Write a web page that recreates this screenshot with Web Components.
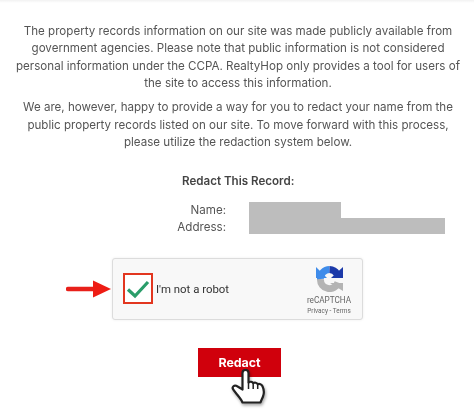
<!DOCTYPE html>
<html>
<head>
<meta charset="utf-8">
<style>
html,body{margin:0;padding:0;background:#fff}
body{width:474px;height:420px;overflow:hidden;font-family:Inter,"Liberation Sans",sans-serif;color:#4d4d4d}
p{margin:0}
</style>
</head>
<body>
<redact-page>
  <notice-text>
    <p>The property records information on our site was made publicly available from<br>government agencies. Please note that public information is not considered<br>personal information under the CCPA. RealtyHop only provides a tool for users of<br>the site to access this information.</p>
    <p>We are, however, happy to provide a way for you to redact your name from the<br>public property records listed on our site. To move forward with this process,<br>please utilize the redaction system below.</p>
  </notice-text>
  <record-summary></record-summary>
  <captcha-row></captcha-row>
  <redact-button>Redact</redact-button>
</redact-page>
<script>
class RedactPage extends HTMLElement{
    constructor(){
        super();
        this.attachShadow({mode:'open'}).innerHTML=`
        <style>
        :host{display:flex;flex-direction:column;width:474px;height:420px;box-sizing:border-box;padding-top:23px;filter:blur(.45px);
            background:linear-gradient(#f2f2f2,#fff 3px)}
        </style>
        <slot></slot>`
    }
}
class NoticeText extends HTMLElement{
    constructor(){
        super();
        this.attachShadow({mode:'open'}).innerHTML=`
        <style>
        :host{display:flex;flex-direction:column;gap:6.5px;padding-left:2px;font-size:11.6px;line-height:17.45px;text-align:center;white-space:nowrap;color:#555}
        </style>
        <slot></slot>`
    }
}
class RecordSummary extends HTMLElement{
    constructor(){
        super();
        this.attachShadow({mode:'open'}).innerHTML=`
        <style>
        :host{display:block;margin-top:21.500px;font-size:11.6px;line-height:17.5px;color:#555}
        .title{font-weight:600;color:#444;margin-left:182px}
        .rows{display:grid;grid-template-columns:226px 219px;margin-top:11px;height:33px}
        .labels{text-align:right;line-height:17.5px}
        .hide{position:relative;margin-left:23px}
        .a,.b{position:absolute;background:#bdbdbd;left:0}
        .a{top:0;width:92px;height:32px}
        .b{top:16px;width:196px;height:16px}
        </style>
        <div class="title">Redact This Record:</div>
        <div class="rows">
            <div class="labels">Name:<br>Address:</div>
            <div class="hide"><div class="a"></div><div class="b"></div></div>
        </div>`
    }
}
class CaptchaRow extends HTMLElement{
    constructor(){
        super();
        this.attachShadow({mode:'open'}).innerHTML=`
        <style>
        :host{display:flex;align-items:center;margin-top:23px;padding-left:66px;height:62px}
        .arrow{width:46px;height:18px;flex:none}
        .box{box-sizing:border-box;width:251px;height:62px;display:flex;align-items:center;background:#f8f8f8;border:1px solid #dcdcdc;border-radius:3px;box-shadow:0 0 3px rgba(0,0,0,.07);padding-left:10px;font-family:Roboto,sans-serif;color:#333}
        .check{box-sizing:border-box;width:30px;height:31px;border:2.5px solid #e2361f;background:#fff;flex:none;display:flex;align-items:center;justify-content:center;margin-right:3px}
        .label{font-size:11.4px;flex:1}
        .brand{width:54px;margin:3px 6px 0 0;display:flex;flex-direction:column;align-items:center;color:#666}
        .brand svg{width:27px;height:27px;margin-bottom:3px}
        .rc{font-size:8.2px;line-height:11px}
        .links{font-size:6.4px;line-height:10px}
        </style>
        <svg class="arrow" viewBox="0 0 46 18"><path d="M2 9H29" stroke="#e8201a" stroke-width="4.5" stroke-linecap="round"/><path d="M27 0.5L45 9L27 17.5Z" fill="#ee1c14"/></svg>
        <div class="box">
            <div class="check"><svg width="24" height="20" viewBox="0 0 24 20"><path d="M2 10.500L9 17L22 3" fill="none" stroke="#2a9d6a" stroke-width="3.200"/></svg></div>
            <div class="label">I'm not a robot</div>
            <div class="brand">
                <svg viewBox="0 0 27 27">
                    <path d="M4.500 14A9 9 0 0 0 22 17.500" fill="none" stroke="#b4b4b4" stroke-width="7"/>
                    <path d="M14 18H27V26Z" fill="#b4b4b4"/>
                    <path d="M4.500 14A9 9 0 0 1 13.500 4.500" fill="none" stroke="#3f8cea" stroke-width="7"/>
                    <path d="M0 2L11 13H0Z" fill="#3f8cea"/>
                    <path d="M13.500 4.500A9 9 0 0 1 21 9" fill="none" stroke="#1c3aa9" stroke-width="7"/>
                    <path d="M27 2V13H15Z" fill="#1c3aa9"/>
                </svg>
                <div class="rc">reCAPTCHA</div>
                <div class="links">Privacy - Terms</div>
            </div>
        </div>`
    }
}
class RedactButton extends HTMLElement{
    constructor(){
        super();
        this.attachShadow({mode:'open'}).innerHTML=`
        <style>
        :host{display:block;position:relative;align-self:flex-start;margin:28px 0 0 198px}
        .btn{width:83px;height:29px;background:#d0000c;color:#fff;font-weight:700;font-size:12.4px;display:flex;align-items:center;justify-content:center}
        .hand{position:absolute;left:33px;top:21px;width:36px;height:38px;filter:drop-shadow(1px 2px 1.5px rgba(0,0,0,.35))}
        </style>
        <div class="btn"><slot></slot></div>
        <svg class="hand" viewBox="0 0 36 38">
            <path d="M14.500 1C16.200 1 17.500 2.300 17.500 4V13.500C19 12.500 21.200 12.800 22.200 14.200C23.700 13.200 25.800 13.600 26.700 15.200C28.400 14.400 30.600 15.300 31.500 17.200C33 20.500 33.200 24.500 32 27.500C31.200 29.500 30 31.500 29.500 33.500H11.500C10.500 31 8.500 28.500 6.300 25.800C4.800 23.800 2.800 21.800 1.800 19.800C1 17.800 3.200 16 5.200 16.800C7 17.500 9.500 19.500 11.500 20.500V4C11.500 2.300 12.800 1 14.500 1Z" fill="#fff" stroke="#222" stroke-width="2.200" stroke-linejoin="round"/>
            <path d="M17.500 13.500V20M22.200 14.200V20M26.700 15.200V20" stroke="#222" stroke-width="1.500" fill="none"/>
        </svg>`
    }
}
customElements.define('redact-page',RedactPage)
customElements.define('notice-text',NoticeText)
customElements.define('record-summary',RecordSummary)
customElements.define('captcha-row',CaptchaRow)
customElements.define('redact-button',RedactButton)
</script>
</body>
</html>
